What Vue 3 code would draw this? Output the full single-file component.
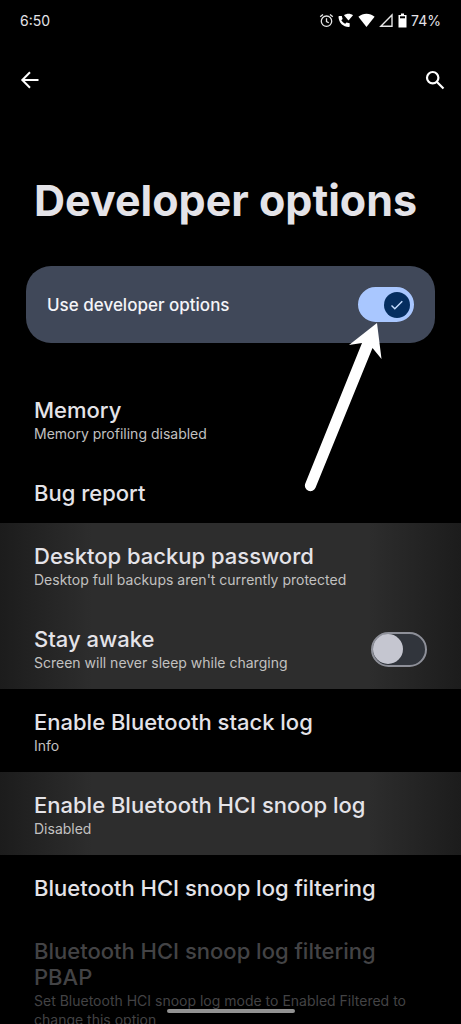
<template>
  <div class="screen">
    <div class="status-bar">
      <span>6:50</span>
      <div class="status-icons">
        <svg width="15" height="15" viewBox="0 0 15 15" fill="none" stroke="#e6e6e6" stroke-width="1.3">
          <circle cx="7.5" cy="8.2" r="5.2" />
          <path d="M7.5 5.2v3.3l2.3 1.3M1.2 3.8l2.8-2.4M13.8 3.8L11 1.4" />
        </svg>
        <svg width="16" height="15" viewBox="0 0 16 15" fill="#fff">
          <path d="M1.2 3h2.6l.8 3-1.3 1.3c.9 1.5 2.1 2.7 3.9 3.5l1.3-1.4 3.2.9v2.6c0 .6-.4 1.1-1 1.1C5.2 14 .8 9.8.5 4c0-.6.2-1 .7-1z" />
          <path d="M6 2.2C8.6.2 12.4.2 15 2.2l-4.5 5.4z" />
        </svg>
        <svg width="17" height="15" viewBox="0 0 17 15" fill="#fff">
          <path d="M.4 3.8C5-.3 12-.3 16.6 3.8L8.5 14z" />
        </svg>
        <svg width="15" height="15" viewBox="0 0 15 15" fill="none" stroke="#e6e6e6" stroke-width="1.4">
          <path d="M13 2v11.3H1.8z" />
        </svg>
        <svg width="9" height="15" viewBox="0 0 9 15">
          <path d="M3 .5h3V2h2.5v12.5h-8V2H3z" fill="#fff" />
          <path d="M2 3.3h5v2H2z" fill="#000" />
        </svg>
        <span>74%</span>
      </div>
    </div>

    <header class="toolbar">
      <button aria-label="Back">
        <svg width="20" height="20" viewBox="0 0 20 20" fill="none" stroke="#fff" stroke-width="2">
          <path d="M18.5 10H2.5M10 2.3L2.3 10l7.7 7.7" />
        </svg>
      </button>
      <button aria-label="Search">
        <svg width="20" height="20" viewBox="0 0 20 20" fill="none" stroke="#fff" stroke-width="2.2">
          <circle cx="7.7" cy="7.7" r="5.7" />
          <path d="M12 12l6.5 6.5" />
        </svg>
      </button>
    </header>

    <h1>Developer options</h1>

    <div class="main-switch">
      <label for="use-dev">Use developer options</label>
      <span class="switch">
        <input id="use-dev" v-model="enabled" type="checkbox" />
        <svg v-if="enabled" class="check" width="14" height="14" viewBox="0 0 14 14" fill="none" stroke="#c4dcff" stroke-width="1.4">
          <path d="M1.5 7.5l3.3 3.3 7.5-7.6" />
        </svg>
      </span>
      <!-- Arrow pointing at the switch -->
      <svg class="pointer" width="80" height="170" viewBox="0 0 80 170" fill="#fff">
        <path d="M73 1L45 23l13-2L1.3 161.5a5.5 5.5 0 0 0 10.2 4.2L68.5 26l9 11z" />
      </svg>
    </div>

    <ul class="options">
      <li
        v-for="item in options"
        :key="item.id"
        :class="{ highlight: item.highlight, disabled: item.disabled }"
      >
        <div class="text">
          <component :is="item.toggle ? 'label' : 'div'" class="title" :for="item.toggle ? item.id : null">
            {{ item.title }}
          </component>
          <div v-if="item.summary" class="summary">{{ item.summary }}</div>
        </div>
        <span v-if="item.toggle" class="switch">
          <input :id="item.id" v-model="stayAwake" type="checkbox" />
        </span>
      </li>
    </ul>

    <div class="home-bar"></div>
  </div>
</template>

<script setup>
import { ref } from 'vue'

const enabled = ref(true)
const stayAwake = ref(false)

const options = [
  { id: 'memory', title: 'Memory', summary: 'Memory profiling disabled' },
  { id: 'bug-report', title: 'Bug report' },
  {
    id: 'backup-password',
    title: 'Desktop backup password',
    summary: "Desktop full backups aren't currently protected",
    highlight: true,
  },
  {
    id: 'stay-awake',
    title: 'Stay awake',
    summary: 'Screen will never sleep while charging',
    highlight: true,
    toggle: true,
  },
  { id: 'stack-log', title: 'Enable Bluetooth stack log', summary: 'Info' },
  {
    id: 'snoop-log',
    title: 'Enable Bluetooth HCI snoop log',
    summary: 'Disabled',
    highlight: true,
  },
  { id: 'snoop-filter', title: 'Bluetooth HCI snoop log filtering' },
  {
    id: 'snoop-pbap',
    title: 'Bluetooth HCI snoop log filtering PBAP',
    summary: 'Set Bluetooth HCI snoop log mode to Enabled Filtered to change this option',
    disabled: true,
  },
]
</script>

<style>
body {
  margin: 0;
  background: #000;
}
</style>

<style scoped>
.screen {
  height: 100vh;
  overflow: hidden;
  background: #000;
  color: #e4e3e8;
  font-family: Inter, 'Liberation Sans', sans-serif;
}

.status-bar {
  display: flex;
  justify-content: space-between;
  align-items: center;
  height: 40px;
  padding: 0 20px;
  font-size: 14px;
}

.status-icons {
  display: flex;
  align-items: center;
  gap: 4px;
}

.toolbar {
  display: flex;
  justify-content: space-between;
  align-items: center;
  height: 80px;
  padding: 0 16px 0 20px;
}

.toolbar button {
  display: flex;
  padding: 0;
  border: none;
  background: none;
  cursor: pointer;
}

h1 {
  margin: 52px 34px 38px;
  font-size: 43px;
  line-height: 56px;
  font-weight: 700;
}

.main-switch {
  position: relative;
  display: flex;
  justify-content: space-between;
  align-items: center;
  height: 77px;
  margin: 0 26px 34px;
  padding: 0 21px;
  border-radius: 25px;
  background: #404859;
  color: #f4f4f8;
  font-size: 17px;
  font-weight: 500;
}

.pointer {
  position: absolute;
  top: 56px;
  right: 51px;
  pointer-events: none;
}

.switch {
  position: relative;
  display: flex;
  flex-shrink: 0;
}

.switch input {
  appearance: none;
  display: flex;
  align-items: center;
  box-sizing: border-box;
  width: 56px;
  height: 35px;
  margin: 0;
  border: 2px solid #8e9099;
  border-radius: 18px;
  background: #31353c;
  cursor: pointer;
}

.switch input::before {
  content: '';
  width: 30px;
  height: 30px;
  border-radius: 50%;
  background: #c5c6d0;
}

.switch input:checked {
  justify-content: flex-end;
  padding-right: 2px;
  border-color: #a9c7ff;
  background: #a9c7ff;
}

.switch input:checked::before {
  width: 26px;
  height: 26px;
  background: #052e60;
}

.check {
  position: absolute;
  top: 11px;
  right: 10px;
  pointer-events: none;
}

.options {
  margin: 0;
  padding: 0;
  list-style: none;
}

.options li {
  display: flex;
  justify-content: space-between;
  align-items: center;
  padding: 20px 34px 17px;
}

.options .highlight {
  background: linear-gradient(90deg, #1c1c1c, #2d2d2d 20%, #2d2d2d 80%, #1c1c1c);
}

.title {
  display: block;
  font-size: 22px;
  line-height: 26px;
  font-weight: 500;
}

.summary {
  margin-top: 1px;
  color: #c2c1c0;
  font-size: 14px;
  line-height: 19px;
}

.disabled .title,
.disabled .summary {
  color: #434345;
}

.home-bar {
  position: fixed;
  bottom: 11px;
  left: 50%;
  width: 128px;
  height: 4px;
  border-radius: 2px;
  background: #929292;
  transform: translateX(-50%);
}
</style>
